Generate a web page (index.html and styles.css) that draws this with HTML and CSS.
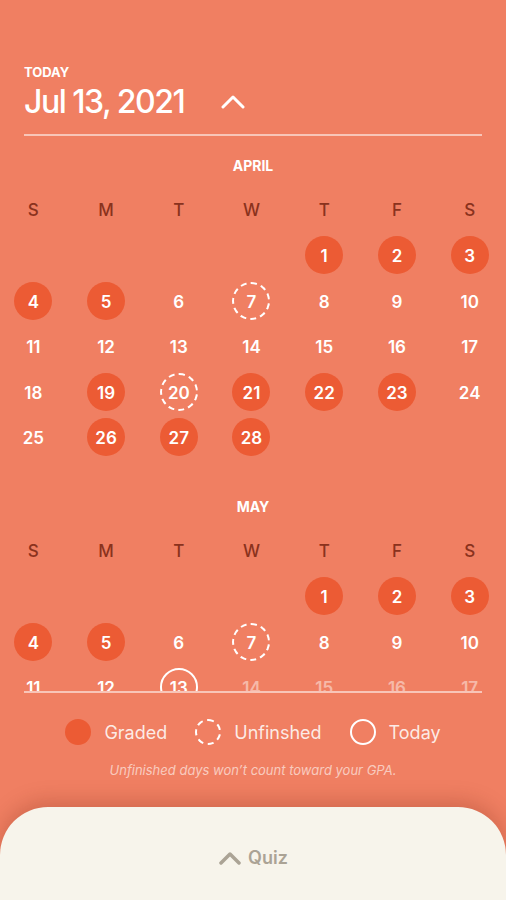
FILE: index.html
```html
<!DOCTYPE html>
<html lang="en">
<head>
    <meta charset="UTF-8">
    <meta name="viewport" content="width=device-width, initial-scale=1.0">
    <title>Calendar</title>
    <link rel="stylesheet" href="styles.css">
</head>
<body>
    <div class="screen">
        <header class="top">
            <div class="today-label">TODAY</div>
            <div class="date-row">
                <span class="date">Jul 13, 2021</span>
                <svg class="chevron" width="24" height="14" viewBox="0 0 24 14">
                    <polyline points="2,12 12,2 22,12" fill="none" stroke="#fff" stroke-width="3" stroke-linecap="round" stroke-linejoin="round"/>
                </svg>
            </div>
        </header>
        <div class="rule"></div>
        <div class="months" id="months"></div>
        <div class="rule"></div>
        <div class="legend">
            <div class="key"><span class="dot dot-graded"></span>Graded</div>
            <div class="key"><span class="dot dot-unfinished"></span>Unfinshed</div>
            <div class="key"><span class="dot dot-today"></span>Today</div>
        </div>
        <p class="note">Unfinished days won’t count toward your GPA.</p>
        <div class="sheet">
            <span class="quiz">
                <svg width="24" height="14" viewBox="0 0 24 14">
                    <polyline points="3,12 12,3 21,12" fill="none" stroke="#aba395" stroke-width="3.5" stroke-linecap="round" stroke-linejoin="round"/>
                </svg>
                Quiz
            </span>
        </div>
    </div>

    <script>
        // Month data: start is the weekday column of the 1st (0 = Sunday)
        const months = [
            { name: 'APRIL', start: 4, days: 28, graded: [1, 2, 3, 4, 5, 19, 21, 22, 23, 26, 27, 28], unfinished: [7, 20] },
            { name: 'MAY', start: 4, days: 17, graded: [1, 2, 3, 4, 5], unfinished: [7], today: 13, faded: [14, 15, 16, 17] }
        ];
        const weekdays = ['S', 'M', 'T', 'W', 'T', 'F', 'S'];

        function renderMonth(month) {
            const cells = [];
            for (let i = 0; i < month.start; i++) cells.push('<div class="day"></div>');
            for (let d = 1; d <= month.days; d++) {
                let cls = 'day';
                if (month.graded.includes(d)) cls += ' graded';
                if (month.unfinished.includes(d)) cls += ' unfinished';
                if (month.today === d) cls += ' today';
                if (month.faded && month.faded.includes(d)) cls += ' faded';
                cells.push(`<div class="${cls}"><span>${d}</span></div>`);
            }
            return `
                <section class="month">
                    <h2 class="month-title">${month.name}</h2>
                    <div class="grid">
                        ${weekdays.map(w => `<div class="weekday">${w}</div>`).join('')}
                        ${cells.join('')}
                    </div>
                </section>
            `;
        }

        document.getElementById('months').innerHTML = months.map(renderMonth).join('');
    </script>
</body>
</html>
```

FILE: styles.css
```css
body {
    margin: 0;
    font-family: Inter, 'Liberation Sans', sans-serif;
    background-color: #f07f62;
    color: #fff;
}
.screen {
    height: 900px;
    display: flex;
    flex-direction: column;
    overflow: hidden;
}
.top {
    padding: 64px 24px 0;
}
.today-label {
    font-size: 13px;
    font-weight: 700;
    line-height: 16px;
}
.date-row {
    display: flex;
    align-items: center;
    gap: 37px;
    height: 40px;
    margin-top: 2px;
}
.date {
    font-size: 32px;
    font-weight: 500;
    letter-spacing: -1.5px;
    line-height: 40px;
}
.rule {
    height: 2px;
    margin: 12px 24px 0;
    background-color: rgba(255, 255, 255, 0.55);
    flex-shrink: 0;
}
.months {
    height: 555px;
    box-sizing: border-box;
    padding-top: 20px;
    overflow: hidden;
    flex-shrink: 0;
}
.months + .rule {
    margin-top: 0;
}
.month + .month {
    margin-top: 37px;
}
.month-title {
    margin: 0 0 11px;
    text-align: center;
    font-size: 14px;
    font-weight: 700;
    line-height: 20px;
}
.grid {
    display: grid;
    grid-template-columns: repeat(7, 1fr);
    grid-auto-rows: 45.5px;
    margin: 0 0 0 -3px;
}
.weekday,
.day {
    display: flex;
    align-items: center;
    justify-content: center;
}
.weekday {
    color: #8a321d;
    font-size: 17px;
    font-weight: 500;
}
.day span {
    width: 38px;
    height: 38px;
    box-sizing: border-box;
    border-radius: 50%;
    display: flex;
    align-items: center;
    justify-content: center;
    padding-top: 2px;
    font-size: 17px;
    font-weight: 600;
}
.graded span {
    background-color: #ec5b34;
}
.unfinished span {
    border: 2.5px dashed #fff;
}
.today span {
    border: 2.5px solid #fff;
}
.faded {
    opacity: 0.45;
}
.legend {
    display: flex;
    justify-content: center;
    align-items: center;
    gap: 28px;
    margin-top: 26px;
    font-size: 18px;
    color: rgba(255, 255, 255, 0.85);
}
.key {
    display: flex;
    align-items: center;
    gap: 13px;
}
.dot {
    width: 26px;
    height: 26px;
    box-sizing: border-box;
    border-radius: 50%;
}
.dot-graded {
    background-color: #ec5b34;
}
.dot-unfinished {
    border: 2.5px dashed #fff;
}
.dot-today {
    border: 2.5px solid #fff;
}
.note {
    margin: 16px 0 0;
    text-align: center;
    font-size: 13px;
    font-style: italic;
    line-height: 18px;
    color: rgba(255, 255, 255, 0.6);
}
.sheet {
    margin-top: auto;
    height: 93px;
    flex-shrink: 0;
    box-sizing: border-box;
    padding-top: 40px;
    display: flex;
    justify-content: center;
    align-items: flex-start;
    background-color: #f7f4eb;
    border-radius: 48px 48px 0 0;
    box-shadow: 0 -6px 20px rgba(120, 40, 20, 0.25);
}
.quiz {
    display: flex;
    align-items: center;
    gap: 6px;
    color: #aba395;
    font-size: 18px;
    font-weight: 600;
    line-height: 22px;
}
```
